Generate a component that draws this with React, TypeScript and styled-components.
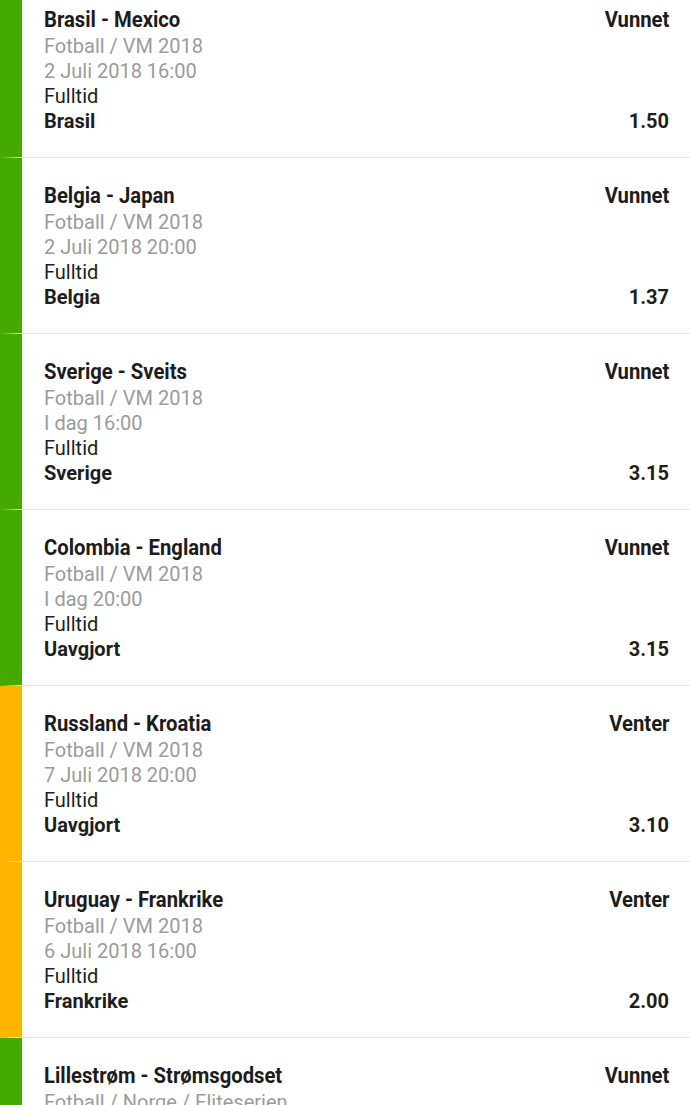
import React from "react";
import styled, { createGlobalStyle } from "styled-components";

type Bet = {
  match: string;
  league: string;
  time: string;
  market: string;
  pick: string;
  odds: string;
  status: "Vunnet" | "Venter";
};

const bets: Bet[] = [
  { match: "Brasil - Mexico", league: "Fotball / VM 2018", time: "2 Juli 2018 16:00", market: "Fulltid", pick: "Brasil", odds: "1.50", status: "Vunnet" },
  { match: "Belgia - Japan", league: "Fotball / VM 2018", time: "2 Juli 2018 20:00", market: "Fulltid", pick: "Belgia", odds: "1.37", status: "Vunnet" },
  { match: "Sverige - Sveits", league: "Fotball / VM 2018", time: "I dag 16:00", market: "Fulltid", pick: "Sverige", odds: "3.15", status: "Vunnet" },
  { match: "Colombia - England", league: "Fotball / VM 2018", time: "I dag 20:00", market: "Fulltid", pick: "Uavgjort", odds: "3.15", status: "Vunnet" },
  { match: "Russland - Kroatia", league: "Fotball / VM 2018", time: "7 Juli 2018 20:00", market: "Fulltid", pick: "Uavgjort", odds: "3.10", status: "Venter" },
  { match: "Uruguay - Frankrike", league: "Fotball / VM 2018", time: "6 Juli 2018 16:00", market: "Fulltid", pick: "Frankrike", odds: "2.00", status: "Venter" },
  { match: "Lillestrøm - Strømsgodset", league: "Fotball / Norge / Eliteserien", time: "I dag 18:00", market: "Fulltid", pick: "Lillestrøm", odds: "2.40", status: "Vunnet" },
];

const GlobalStyle = createGlobalStyle`
  body {
    margin: 0;
    background: #fff;
    font-family: Roboto, "Liberation Sans", sans-serif;
    overflow: hidden;
  }
`;

const List = styled.div`
  margin-top: -18px;
`;

const Row = styled.div<{ $won: boolean }>`
  display: flex;
  border-bottom: 1px dotted #cfcfcf;
  border-left: 22px solid ${(p) => (p.$won ? "#45aa00" : "#ffb400")};
  padding: 25px 21px 23px 22px;
`;

const Info = styled.div`
  flex: 1;
  display: flex;
  flex-direction: column;
`;

const Side = styled.div`
  display: flex;
  flex-direction: column;
  justify-content: space-between;
  align-items: flex-end;
`;

const Title = styled.div`
  font-weight: 700;
  font-size: 22px;
  line-height: 25px;
  margin-bottom: 2px;
  color: #1c1c1c;
  transform: scaleX(0.92);
  transform-origin: left center;
  white-space: nowrap;
`;

const Status = styled(Title)`
  transform-origin: right center;
`;

const Meta = styled.div<{ $muted?: boolean }>`
  font-size: 20px;
  line-height: 25px;
  color: ${(p) => (p.$muted ? "#9b9b9b" : "#1e1e1e")};
  white-space: nowrap;
`;

const Strong = styled.div`
  font-size: 20px;
  line-height: 25px;
  font-weight: 700;
  color: #1e1e1e;
`;

export default function App() {
  return (
    <>
      <GlobalStyle />
      <List>
        {bets.map((b) => (
          <Row key={b.match} $won={b.status === "Vunnet"}>
            <Info>
              <Title>{b.match}</Title>
              <Meta $muted>{b.league}</Meta>
              <Meta $muted>{b.time}</Meta>
              <Meta>{b.market}</Meta>
              <Strong>{b.pick}</Strong>
            </Info>
            <Side>
              <Status>{b.status}</Status>
              <Strong>{b.odds}</Strong>
            </Side>
          </Row>
        ))}
      </List>
    </>
  );
}
